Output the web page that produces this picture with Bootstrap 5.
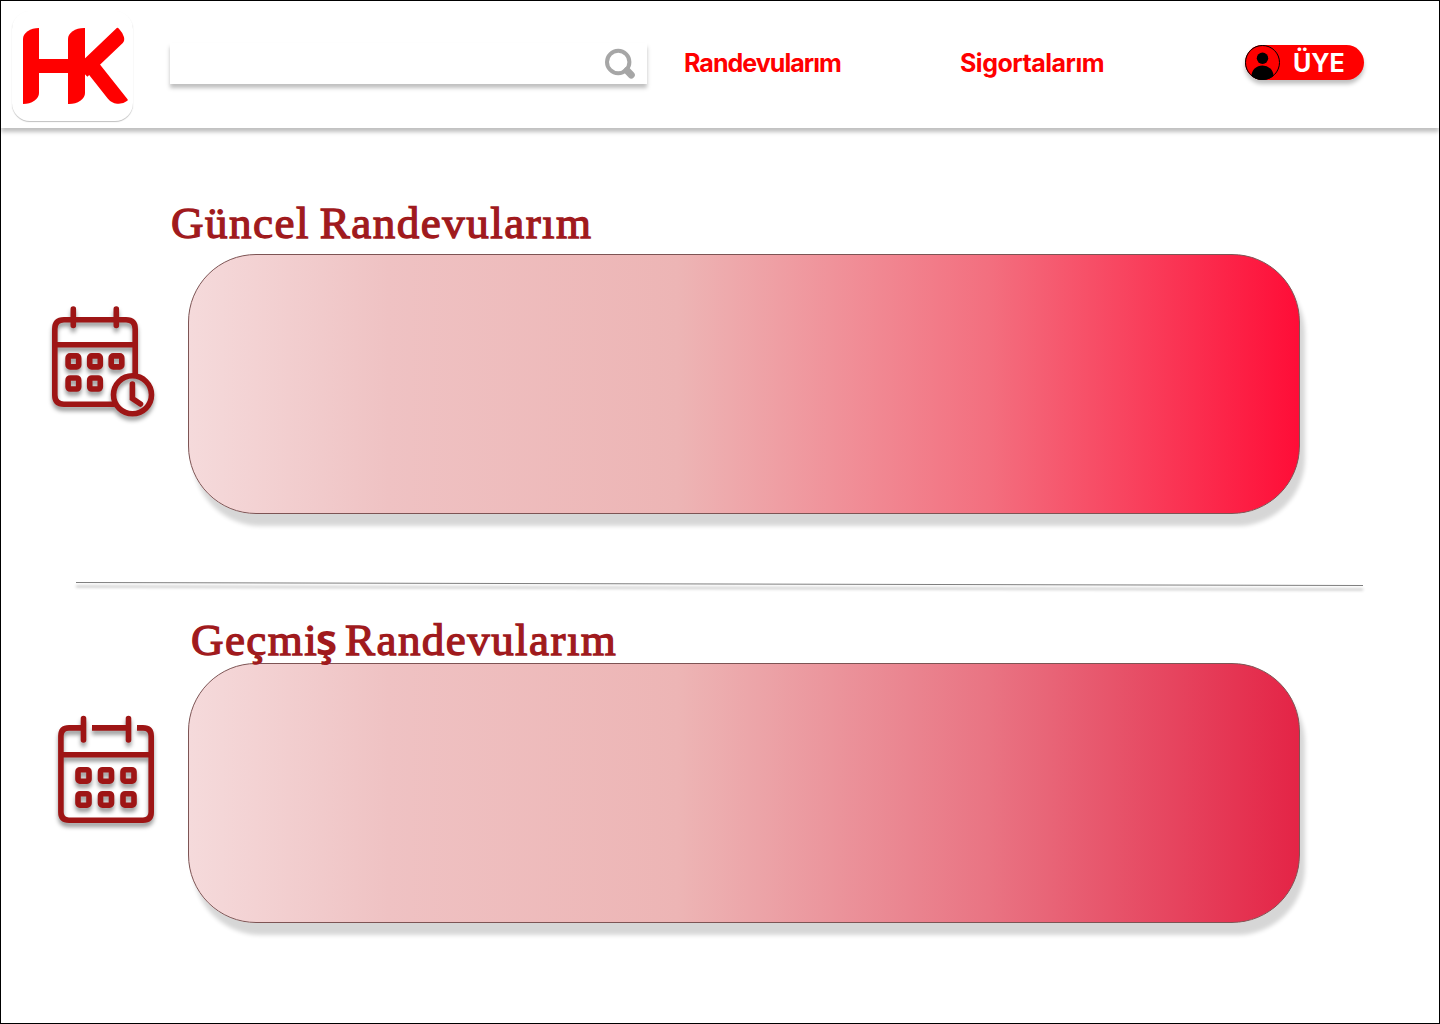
<!DOCTYPE html>
<html lang="tr">
<head>
<meta charset="utf-8">
<meta name="viewport" content="width=device-width, initial-scale=1">
<title>Randevularım</title>
<link href="https://cdn.jsdelivr.net/npm/bootstrap@5.3.0/dist/css/bootstrap.min.css" rel="stylesheet">
<style>
  body { background: #fff; }
  .page-frame { width: 1440px; height: 1024px; border: 1px solid #000; overflow: hidden; }
  .top-bar { height: 127px; padding-left: 11px; box-shadow: 0 4px 4px rgba(0,0,0,.25); }
  .logo-tile { width: 121px; height: 110px; margin-top: 10px; border-radius: 18px; box-shadow: 0 1px 1px rgba(0,0,0,.25); position: relative; }
  .logo-tile i { position: absolute; background: #f00; }
  .stem-a, .stem-b { top: 17px; width: 16px; height: 76px; border-radius: 16px 0 16px 0 / 11px 0 11px 0; }
  .stem-a { left: 11px; }
  .stem-b { left: 56px; width: 16.500px; }
  .bridge { left: 20px; top: 48px; width: 45px; height: 13.500px; }
  .arm-up { left: 65.300px; top: 55.400px; width: 56px; height: 14.500px; border-radius: 0 1px 7px 0 / 0 1px 12px 0; transform-origin: 0 0; transform: rotate(-43.7deg); }
  .arm-down { left: 82px; top: 46.200px; width: 55px; height: 15px; border-radius: 0 1px 14px 0; transform-origin: 0 0; transform: rotate(51.6deg); }
  .search-box { width: 477px; height: 41px; margin: 42px 0 0 37px; padding: 0 11px 0 12px; box-shadow: 0 4px 4px rgba(0,0,0,.25); }
  .search-box input { outline: 0; background: transparent; }
  .menu-link { color: #f00; font: 700 25px/32px "Inter", sans-serif; margin-top: 46px; text-decoration: none; white-space: nowrap; }
  .menu-first { margin-left: 37px; width: 276px; letter-spacing: -.95px; }
  .menu-second { width: 285px; letter-spacing: -.5px; }
  .member-btn { width: 119px; height: 35px; margin-top: 44px; background: #f00; color: #fff; font: 700 25px/36px "Inter", sans-serif; box-shadow: 0 4px 4px rgba(0,0,0,.25); }
  .member-btn span { margin-left: 13px; }
  .section-title { color: #a01a1d; font: 400 45px/50px "Liberation Serif", serif; -webkit-text-stroke: 1.300px #a01a1d; white-space: nowrap; margin: 0; }
  .title-current { padding: 70px 0 0 170px; height: 126px; letter-spacing: 1.500px; word-spacing: -3px; }
  .title-past { padding: 30px 0 0 190px; height: 78px; letter-spacing: 1.450px; word-spacing: -4px; position: relative; }
  .title-past span { font: 700 43px/40px "Noto Sans", sans-serif; -webkit-text-stroke: 0; letter-spacing: -1px; margin-left: -2.500px; }
  .icon-col { width: 187px; flex: none; }
  .panel-box { width: 1112px; height: 260px; border: 1px solid #7d5454; border-radius: 68px; box-shadow: 5px 12px 4px rgba(0,0,0,.16); }
  .panel-current { background: linear-gradient(90deg, #f5dadb 0%, #efc2c3 18%, #edb5b5 44%, #f36f7f 72%, #ff0d37 100%); }
  .panel-past { background: linear-gradient(90deg, #f5dadb 0%, #efc2c3 18%, #edb5b5 44%, #e97483 72%, #e42446 100%); }
  .calendar { filter: drop-shadow(0 4px 2px rgba(0,0,0,.4)); fill: none; stroke: #9e1515; stroke-width: 5.600; stroke-linecap: round; }
  .cal-current, .cal-past { margin: 49px 0 0 47px; }
  .divider { display: block; margin: 66px 0 0 75px; filter: drop-shadow(0 4px 1.500px rgba(0,0,0,.45)); overflow: visible; }
</style>
</head>
<body>
<div class="page-frame">
  <header class="top-bar d-flex align-items-start">
    <a class="logo-tile d-block" href="#" aria-label="HK"><i class="stem-a"></i><i class="bridge"></i><i class="stem-b"></i><i class="arm-up"></i><i class="arm-down"></i></a>
    <div class="search-box d-flex align-items-center">
      <input class="border-0 flex-grow-1" type="text" aria-label="Ara">
      <svg width="32" height="32" fill="none" stroke="#a6a6a6"><circle cx="14.200" cy="14" r="11.200" stroke-width="4"/><path d="M23 22.500L27.300 27" stroke-width="7" stroke-linecap="round"/></svg>
    </div>
    <a class="menu-link menu-first" href="#">Randevularım</a>
    <a class="menu-link menu-second" href="#">Sigortalarım</a>
    <a class="member-btn d-flex rounded-pill text-decoration-none" href="#">
      <svg width="35" height="35" class="flex-shrink-0"><defs><clipPath id="face"><circle cx="17.500" cy="17.500" r="17.500"/></clipPath></defs><circle cx="17.500" cy="17.500" r="17" fill="none" stroke="#000"/><circle cx="17.500" cy="13.200" r="5.700"/><ellipse cx="17.500" cy="31" rx="11" ry="10.500" clip-path="url(#face)"/></svg>
      <span>ÜYE</span>
    </a>
  </header>
  <main>
    <h1 class="section-title title-current">Güncel Randevularım</h1>
    <section class="d-flex">
      <div class="icon-col">
        <svg class="calendar cal-current" width="120" height="125">
          <path d="M65 101.200H16Q6.800 101.200 6.800 92V26Q6.800 16.800 16 16.800H78Q87.200 16.800 87.200 26V71M7 41.700H87M25.300 6V22.500M68.300 6V22.500"/>
          <g><rect x="20.100" y="52.900" width="10.600" height="11" rx="2"/><rect x="41.700" y="52.900" width="10.600" height="11" rx="2"/><rect x="63.200" y="52.900" width="10.600" height="11" rx="2"/><rect x="20.100" y="75" width="10.600" height="11" rx="2"/><rect x="41.700" y="75" width="10.600" height="11" rx="2"/></g>
          <circle cx="84.500" cy="91.800" r="19"/><path d="M84.400 81V95.500L92.500 101"/>
        </svg>
      </div>
      <div class="panel-box panel-current"></div>
    </section>
    <svg class="divider" width="1287" height="5"><path d="M0 2.500L1287 5.500" stroke="#7e7e7e"/></svg>
    <h2 class="section-title title-past">Geçmi<span>ş</span> Randevularım</h2>
    <section class="d-flex">
      <div class="icon-col">
        <svg class="calendar cal-past" width="120" height="125">
          <path d="M34 15.900H21Q12.900 15.900 12.900 24V100Q12.900 108.200 21 108.200H95Q103.200 108.200 103.200 100V24Q103.200 15.900 95 15.900H89M44 15.900H80M13 42.700H103" stroke-linecap="butt"/><path d="M35.500 6.500V28M80.500 6.500V28"/>
          <g><rect x="30" y="57.700" width="11" height="11.500" rx="2"/><rect x="52.500" y="57.700" width="11" height="11.500" rx="2"/><rect x="75" y="57.700" width="11" height="11.500" rx="2"/><rect x="30" y="81.700" width="11" height="11.500" rx="2"/><rect x="52.500" y="81.700" width="11" height="11.500" rx="2"/><rect x="75" y="81.700" width="11" height="11.500" rx="2"/></g>
        </svg>
      </div>
      <div class="panel-box panel-past"></div>
    </section>
  </main>
</div>
<script src="https://cdn.jsdelivr.net/npm/bootstrap@5.3.0/dist/js/bootstrap.bundle.min.js"></script>
</body>
</html>
